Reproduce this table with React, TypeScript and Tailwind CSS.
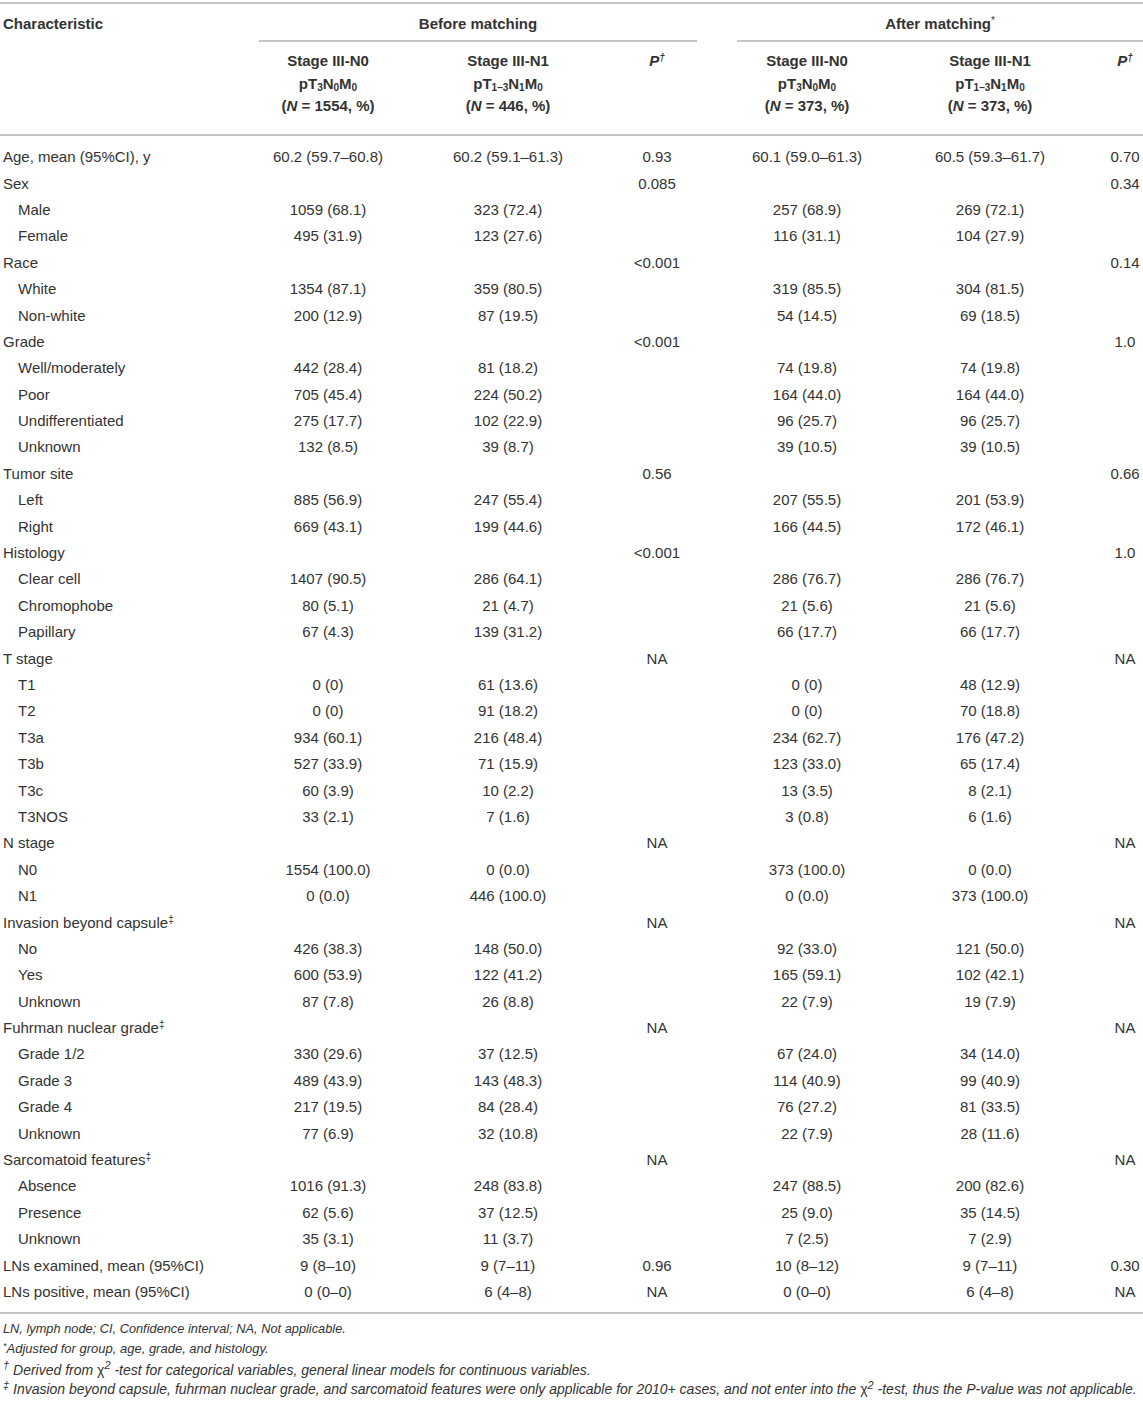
import type { ReactNode } from "react";

type Row = {
  label: ReactNode;
  sub?: boolean;
  v: [string, string, string, string, string, string];
};

const dag = <sup className="text-[10px] not-italic">‡</sup>;

const rows: Row[] = [
  { label: "Age, mean (95%CI), y", v: ["60.2 (59.7–60.8)", "60.2 (59.1–61.3)", "0.93", "60.1 (59.0–61.3)", "60.5 (59.3–61.7)", "0.70"] },
  { label: "Sex", v: ["", "", "0.085", "", "", "0.34"] },
  { label: "Male", sub: true, v: ["1059 (68.1)", "323 (72.4)", "", "257 (68.9)", "269 (72.1)", ""] },
  { label: "Female", sub: true, v: ["495 (31.9)", "123 (27.6)", "", "116 (31.1)", "104 (27.9)", ""] },
  { label: "Race", v: ["", "", "<0.001", "", "", "0.14"] },
  { label: "White", sub: true, v: ["1354 (87.1)", "359 (80.5)", "", "319 (85.5)", "304 (81.5)", ""] },
  { label: "Non-white", sub: true, v: ["200 (12.9)", "87 (19.5)", "", "54 (14.5)", "69 (18.5)", ""] },
  { label: "Grade", v: ["", "", "<0.001", "", "", "1.0"] },
  { label: "Well/moderately", sub: true, v: ["442 (28.4)", "81 (18.2)", "", "74 (19.8)", "74 (19.8)", ""] },
  { label: "Poor", sub: true, v: ["705 (45.4)", "224 (50.2)", "", "164 (44.0)", "164 (44.0)", ""] },
  { label: "Undifferentiated", sub: true, v: ["275 (17.7)", "102 (22.9)", "", "96 (25.7)", "96 (25.7)", ""] },
  { label: "Unknown", sub: true, v: ["132 (8.5)", "39 (8.7)", "", "39 (10.5)", "39 (10.5)", ""] },
  { label: "Tumor site", v: ["", "", "0.56", "", "", "0.66"] },
  { label: "Left", sub: true, v: ["885 (56.9)", "247 (55.4)", "", "207 (55.5)", "201 (53.9)", ""] },
  { label: "Right", sub: true, v: ["669 (43.1)", "199 (44.6)", "", "166 (44.5)", "172 (46.1)", ""] },
  { label: "Histology", v: ["", "", "<0.001", "", "", "1.0"] },
  { label: "Clear cell", sub: true, v: ["1407 (90.5)", "286 (64.1)", "", "286 (76.7)", "286 (76.7)", ""] },
  { label: "Chromophobe", sub: true, v: ["80 (5.1)", "21 (4.7)", "", "21 (5.6)", "21 (5.6)", ""] },
  { label: "Papillary", sub: true, v: ["67 (4.3)", "139 (31.2)", "", "66 (17.7)", "66 (17.7)", ""] },
  { label: "T stage", v: ["", "", "NA", "", "", "NA"] },
  { label: "T1", sub: true, v: ["0 (0)", "61 (13.6)", "", "0 (0)", "48 (12.9)", ""] },
  { label: "T2", sub: true, v: ["0 (0)", "91 (18.2)", "", "0 (0)", "70 (18.8)", ""] },
  { label: "T3a", sub: true, v: ["934 (60.1)", "216 (48.4)", "", "234 (62.7)", "176 (47.2)", ""] },
  { label: "T3b", sub: true, v: ["527 (33.9)", "71 (15.9)", "", "123 (33.0)", "65 (17.4)", ""] },
  { label: "T3c", sub: true, v: ["60 (3.9)", "10 (2.2)", "", "13 (3.5)", "8 (2.1)", ""] },
  { label: "T3NOS", sub: true, v: ["33 (2.1)", "7 (1.6)", "", "3 (0.8)", "6 (1.6)", ""] },
  { label: "N stage", v: ["", "", "NA", "", "", "NA"] },
  { label: "N0", sub: true, v: ["1554 (100.0)", "0 (0.0)", "", "373 (100.0)", "0 (0.0)", ""] },
  { label: "N1", sub: true, v: ["0 (0.0)", "446 (100.0)", "", "0 (0.0)", "373 (100.0)", ""] },
  { label: <>Invasion beyond capsule{dag}</>, v: ["", "", "NA", "", "", "NA"] },
  { label: "No", sub: true, v: ["426 (38.3)", "148 (50.0)", "", "92 (33.0)", "121 (50.0)", ""] },
  { label: "Yes", sub: true, v: ["600 (53.9)", "122 (41.2)", "", "165 (59.1)", "102 (42.1)", ""] },
  { label: "Unknown", sub: true, v: ["87 (7.8)", "26 (8.8)", "", "22 (7.9)", "19 (7.9)", ""] },
  { label: <>Fuhrman nuclear grade{dag}</>, v: ["", "", "NA", "", "", "NA"] },
  { label: "Grade 1/2", sub: true, v: ["330 (29.6)", "37 (12.5)", "", "67 (24.0)", "34 (14.0)", ""] },
  { label: "Grade 3", sub: true, v: ["489 (43.9)", "143 (48.3)", "", "114 (40.9)", "99 (40.9)", ""] },
  { label: "Grade 4", sub: true, v: ["217 (19.5)", "84 (28.4)", "", "76 (27.2)", "81 (33.5)", ""] },
  { label: "Unknown", sub: true, v: ["77 (6.9)", "32 (10.8)", "", "22 (7.9)", "28 (11.6)", ""] },
  { label: <>Sarcomatoid features{dag}</>, v: ["", "", "NA", "", "", "NA"] },
  { label: "Absence", sub: true, v: ["1016 (91.3)", "248 (83.8)", "", "247 (88.5)", "200 (82.6)", ""] },
  { label: "Presence", sub: true, v: ["62 (5.6)", "37 (12.5)", "", "25 (9.0)", "35 (14.5)", ""] },
  { label: "Unknown", sub: true, v: ["35 (3.1)", "11 (3.7)", "", "7 (2.5)", "7 (2.9)", ""] },
  { label: "LNs examined, mean (95%CI)", v: ["9 (8–10)", "9 (7–11)", "0.96", "10 (8–12)", "9 (7–11)", "0.30"] },
  { label: "LNs positive, mean (95%CI)", v: ["0 (0–0)", "6 (4–8)", "NA", "0 (0–0)", "6 (4–8)", "NA"] },
];

const grid = "grid grid-cols-[233px_190px_170px_128px_172px_194px_56px]";

function Sb({ children }: { children: ReactNode }) {
  return <sub className="text-[10px] leading-none">{children}</sub>;
}

function PHead() {
  return (
    <span className="italic">
      P<sup className="text-[10px]">†</sup>
    </span>
  );
}

function GroupHead({ n0, n1 }: { n0: string; n1: string }) {
  return (
    <>
      <div className="text-center">
        <div>Stage III-N0</div>
        <div>
          pT<Sb>3</Sb>N<Sb>0</Sb>M<Sb>0</Sb>
        </div>
        <div>
          (<span className="italic">N</span> = {n0}, %)
        </div>
      </div>
      <div className="text-center">
        <div>Stage III-N1</div>
        <div>
          pT<Sb>1–3</Sb>N<Sb>1</Sb>M<Sb>0</Sb>
        </div>
        <div>
          (<span className="italic">N</span> = {n1}, %)
        </div>
      </div>
    </>
  );
}

export default function App() {
  return (
    <div className="w-[1143px] bg-white pt-[2px] text-[15px] text-[#333] font-['Liberation_Sans',Arial,sans-serif]">
      <div className="border-t-2 border-[#c6c6c6]">
        {/* header row 1 */}
        <div className="flex font-bold leading-[22px]">
          <div className="w-[259px] pl-[3px] pt-[9px]">Characteristic</div>
          <div className="w-[438px] border-b-2 border-[#c6c6c6] pt-[9px] pb-[5px] text-center">
            Before matching
          </div>
          <div className="w-[40px]" />
          <div className="flex-1 border-b-2 border-[#c6c6c6] pt-[9px] pb-[5px] text-center">
            After matching<sup className="text-[10px] font-normal">*</sup>
          </div>
        </div>
        {/* header row 2 */}
        <div className={`${grid} border-b-2 border-[#c6c6c6] pt-[8px] pb-[16px] font-bold leading-[22.5px]`}>
          <div />
          <GroupHead n0="1554" n1="446" />
          <div className="text-center">
            <PHead />
          </div>
          <GroupHead n0="373" n1="373" />
          <div className="pl-[20px] text-center">
            <PHead />
          </div>
        </div>
      </div>

      <div className="border-b-2 border-[#c6c6c6] pt-[8px] pb-[7px]">
        {rows.map((r, i) => (
          <div key={i} className={`${grid} h-[26.4px] items-center leading-none`}>
            <div className={r.sub ? "pl-[18px]" : "pl-[3px]"}>{r.label}</div>
            {r.v.map((c, j) => (
              <div key={j} className={j === 5 ? "pl-[20px] text-center" : "text-center"}>
                {c}
              </div>
            ))}
          </div>
        ))}
      </div>

      <div className="pl-[3px] pt-[5px] italic">
        <div className="h-[20.5px] text-[12.8px] leading-[20.5px]">
          LN, lymph node; CI, Confidence interval; NA, Not applicable.
        </div>
        <div className="h-[20.5px] text-[13px] leading-[20.5px]">
          <sup className="text-[9px] leading-none">*</sup>Adjusted for group, age, grade, and histology.
        </div>
        <div className="h-[20.5px] whitespace-nowrap text-[14px] leading-[20.5px]">
          <sup className="text-[11px] leading-none">†</sup> Derived from <span className="not-italic">χ</span>
          <sup className="text-[11px] leading-none">2</sup> -test for categorical variables, general linear
          models for continuous variables.
        </div>
        <div className="h-[18px] whitespace-nowrap text-[14px] leading-[18px]">
          <sup className="text-[11px] leading-none">‡</sup> Invasion beyond capsule, fuhrman nuclear grade, and
          sarcomatoid features were only applicable for 2010+ cases, and not enter into the{" "}
          <span className="not-italic">χ</span>
          <sup className="text-[11px] leading-none">2</sup> -test, thus the P-value was not applicable.
        </div>
      </div>
    </div>
  );
}
